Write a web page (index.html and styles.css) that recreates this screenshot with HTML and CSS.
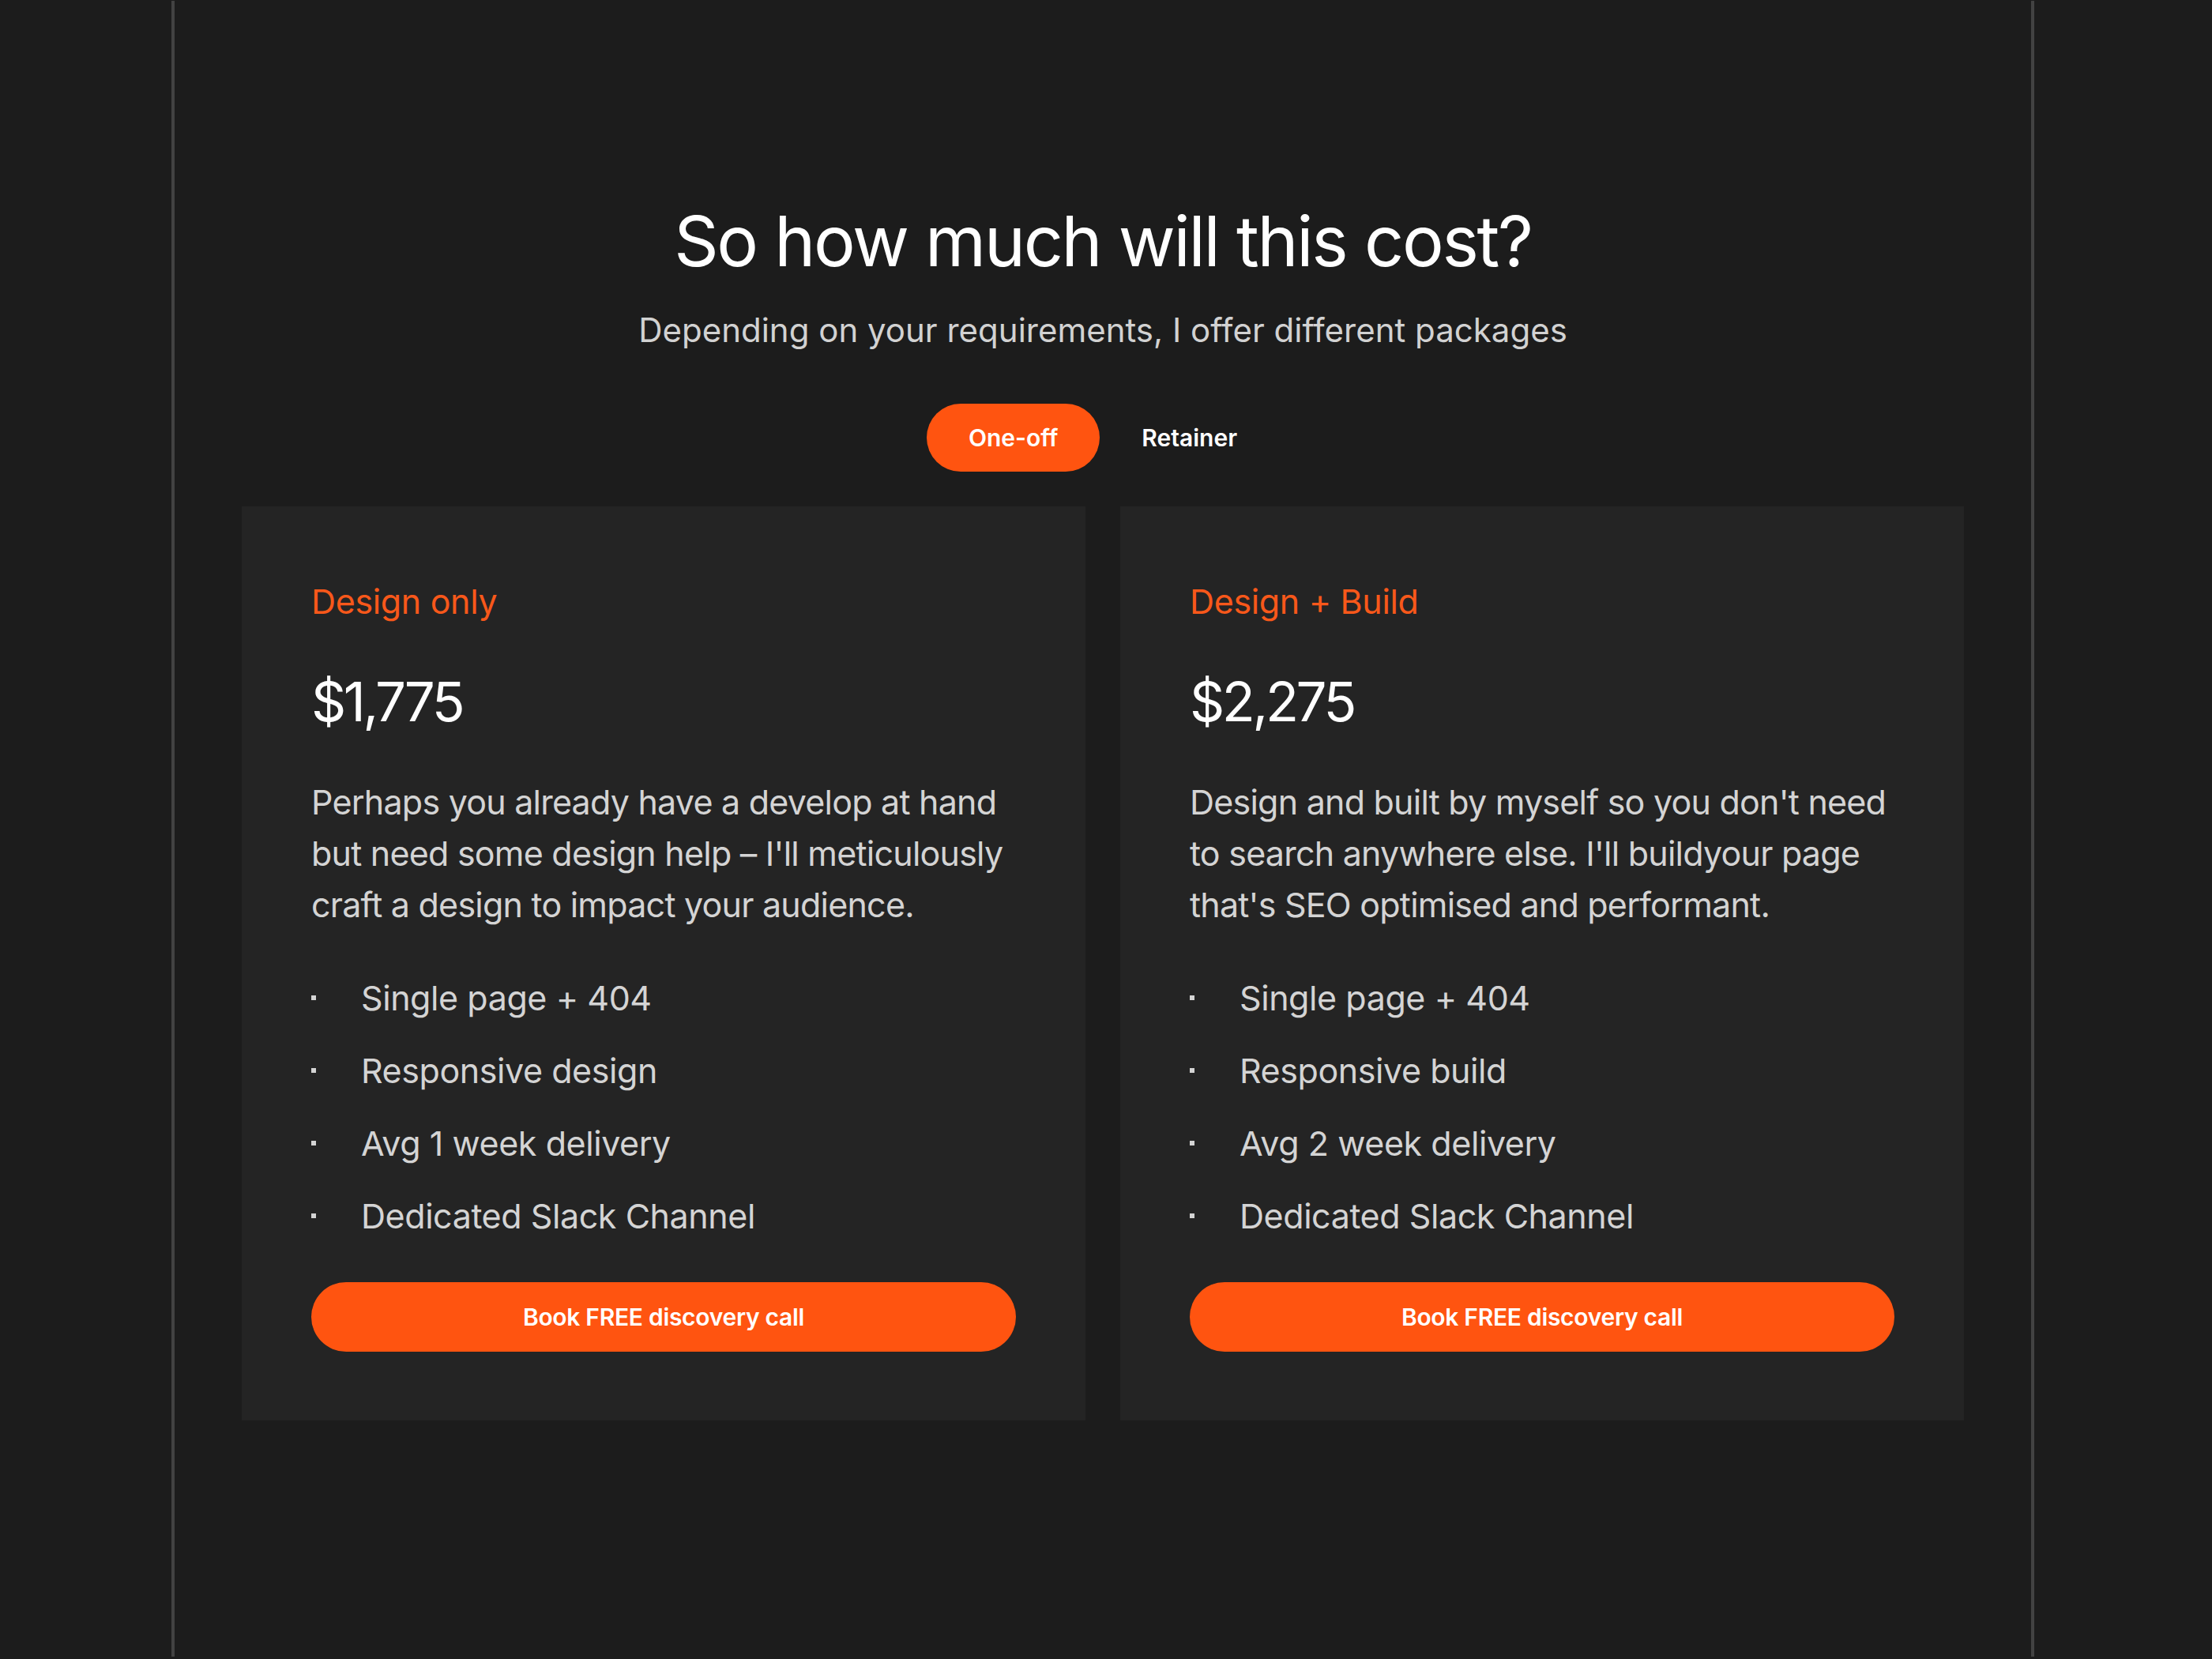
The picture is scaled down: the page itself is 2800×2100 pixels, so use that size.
FILE: index.html
```html
<!DOCTYPE html>
<html lang="en">
<head>
    <meta charset="UTF-8">
    <meta name="viewport" content="width=device-width, initial-scale=1.0">
    <title>Pricing</title>
    <link rel="stylesheet" href="styles.css">
</head>
<body>
    <div class="frame">
        <section class="pricing">
            <h2 class="pricing-title">So how much will this cost?</h2>
            <p class="pricing-subtitle">Depending on your requirements, I offer different packages</p>

            <div class="toggle">
                <button class="toggle-btn active">One-off</button>
                <button class="toggle-btn">Retainer</button>
            </div>

            <div class="cards">
                <div class="card">
                    <h3 class="card-name">Design only</h3>
                    <div class="card-price">$1,775</div>
                    <p class="card-text">Perhaps you already have a develop at hand but need some design help – I'll meticulously craft a design to impact your audience.</p>
                    <ul class="card-list">
                        <li>Single page + 404</li>
                        <li>Responsive design</li>
                        <li>Avg 1 week delivery</li>
                        <li>Dedicated Slack Channel</li>
                    </ul>
                    <a class="card-btn" href="#">Book FREE discovery call</a>
                </div>

                <div class="card">
                    <h3 class="card-name">Design + Build</h3>
                    <div class="card-price">$2,275</div>
                    <p class="card-text">Design and built by myself so you don't need to search anywhere else. I'll buildyour page that's SEO optimised and performant.</p>
                    <ul class="card-list">
                        <li>Single page + 404</li>
                        <li>Responsive build</li>
                        <li>Avg 2 week delivery</li>
                        <li>Dedicated Slack Channel</li>
                    </ul>
                    <a class="card-btn" href="#">Book FREE discovery call</a>
                </div>
            </div>
        </section>
    </div>
</body>
</html>
```

FILE: styles.css
```css
body {
    margin: 0;
    padding-right: 8px;
    background: #1c1c1c;
    font-family: 'Inter', 'Noto Sans', sans-serif;
    color: #fff;
}

/* Page frame with the thin side rules */
.frame {
    width: 2350px;
    min-height: 2096px;
    margin: 1px auto;
    border-left: 4px solid #424242;
    border-right: 4px solid #424242;
}

.pricing {
    padding-top: 252px;
    display: flex;
    flex-direction: column;
    align-items: center;
}

.pricing-title {
    margin: 0;
    font-size: 88px;
    font-weight: 400;
    line-height: 1.2;
    letter-spacing: -0.026em;
}

.pricing-subtitle {
    margin: 32px 0 0;
    font-size: 42px;
    line-height: 1.3;
    letter-spacing: 0;
    color: #d2d2d2;
}

/* One-off / Retainer switch */
.toggle {
    display: flex;
    margin-top: 66px;
}

.toggle-btn {
    height: 86px;
    padding: 0 53px;
    border: none;
    border-radius: 43px;
    background: transparent;
    color: #fff;
    font-family: inherit;
    font-size: 30px;
    font-weight: 600;
    letter-spacing: 0;
}

.toggle-btn.active {
    background: #ff5410;
}

/* Cards */
.cards {
    display: grid;
    grid-template-columns: 1068px 1068px;
    gap: 44px;
    margin-top: 44px;
}

.card {
    background: #242424;
    padding: 95px 88px 87px;
    display: flex;
    flex-direction: column;
}

.card-name {
    margin: 0;
    font-size: 43px;
    font-weight: 400;
    line-height: 1.2;
    letter-spacing: -0.008em;
    color: #f8581a;
}

.card-price {
    margin-top: 59px;
    font-size: 69px;
    line-height: 1.2;
    letter-spacing: -0.05em;
    color: #fff;
}

.card-text {
    margin: 53px 0 0;
    font-size: 43px;
    line-height: 65px;
    letter-spacing: -0.018em;
    color: #d4d4d4;
}

.card-list {
    list-style: none;
    margin: 53px 0 0;
    padding: 0;
    display: flex;
    flex-direction: column;
    gap: 27px;
}

.card-list li {
    display: flex;
    align-items: center;
    gap: 57px;
    font-size: 43px;
    line-height: 65px;
    letter-spacing: -0.01em;
    color: #d4d4d4;
}

.card-list li::before {
    content: '';
    width: 6px;
    height: 6px;
    background: #d4d4d4;
    flex-shrink: 0;
}

.card-btn {
    margin-top: 51px;
    height: 88px;
    border-radius: 44px;
    background: #ff5410;
    color: #fff;
    text-decoration: none;
    display: flex;
    align-items: center;
    justify-content: center;
    font-size: 30px;
    font-weight: 600;
    letter-spacing: -0.01em;
}
```
